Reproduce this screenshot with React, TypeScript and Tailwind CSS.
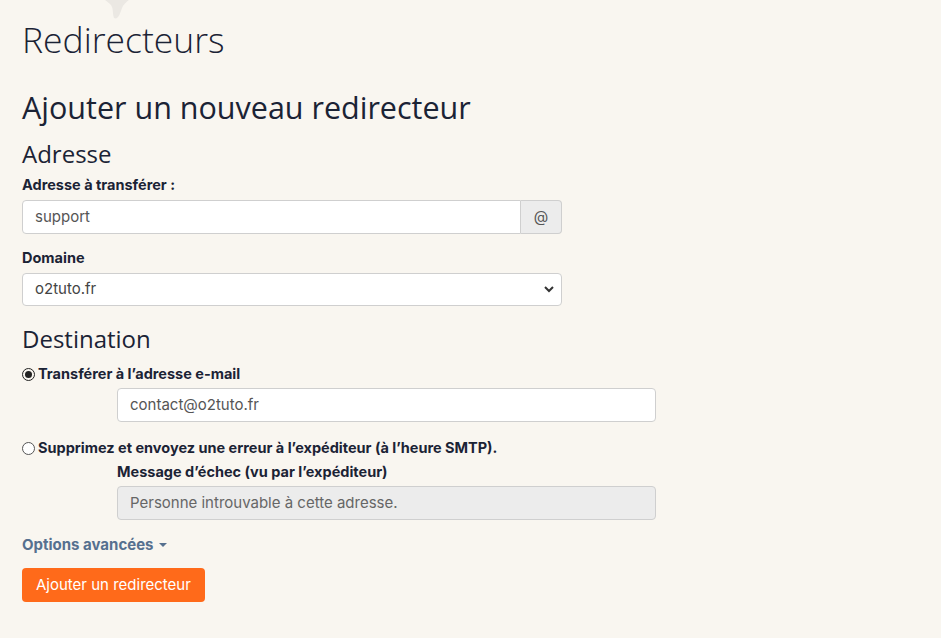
export default function App() {
  return (
    <main className="relative min-h-[638px] bg-[#f9f6f0] text-[#1b2335] font-['Inter','Liberation_Sans',sans-serif] overflow-hidden">
      <svg className="absolute left-[98px] top-[-14px]" width="40" height="36" viewBox="0 0 40 36">
        <path d="M4 6 C10 2 14 10 20 6 C26 2 30 8 36 6 C34 14 26 16 24 22 C22 28 20 34 16 32 C14 26 16 22 12 18 C8 14 2 12 4 6 Z" fill="#ebe8e3" />
      </svg>

      <div className="px-[22px] pt-[16px]">
        <h1 className="font-['Open_Sans',sans-serif] font-light text-[35.5px] leading-[46px] text-[#1b2335]">
          Redirecteurs
        </h1>

        <h2 className="mt-[27px] font-['Open_Sans',sans-serif] text-[30.5px] leading-[36px]">
          Ajouter un nouveau redirecteur
        </h2>

        <h3 className="mt-[14px] font-['Open_Sans',sans-serif] text-[24px] leading-[30px]">
          Adresse
        </h3>

        <label className="mt-[7px] block text-[14.5px] font-bold leading-[18px]">
          Adresse à transférer :
        </label>
        <div className="mt-[6px] flex w-[540px] h-[34px]">
          <input
            className="flex-1 min-w-0 bg-white border border-[#cfcfcf] rounded-l-[4px] px-[12px] text-[15px] text-[#555]"
            defaultValue="support"
          />
          <span className="w-[41px] flex items-center justify-center bg-[#ececec] border border-l-0 border-[#cfcfcf] rounded-r-[4px] text-[15px] text-[#555]">
            @
          </span>
        </div>

        <label className="mt-[15px] block text-[14.5px] font-bold leading-[18px]">Domaine</label>
        <div className="mt-[6px] relative w-[540px] h-[33px]">
          <select className="appearance-none w-full h-full bg-white border border-[#cfcfcf] rounded-[4px] px-[12px] text-[15px] text-[#444]">
            <option>o2tuto.fr</option>
          </select>
          <svg className="absolute right-[8px] top-[13px]" width="10" height="7" viewBox="0 0 10 7">
            <path d="M1 1 L5 5 L9 1" stroke="#333" strokeWidth="2" fill="none" />
          </svg>
        </div>

        <h3 className="mt-[18px] font-['Open_Sans',sans-serif] text-[24px] leading-[30px]">
          Destination
        </h3>

        <div className="mt-[11px] flex items-center gap-[3px]">
          <span className="w-[13px] h-[13px] rounded-full border border-[#222] flex items-center justify-center">
            <span className="w-[7px] h-[7px] rounded-full bg-[#222]" />
          </span>
          <span className="text-[14.5px] font-bold leading-[18px]">Transférer à l’adresse e-mail</span>
        </div>
        <div className="ml-[95px] mt-[5px] w-[539px] h-[34px] bg-white border border-[#cfcfcf] rounded-[4px] px-[12px] flex items-center text-[15px] text-[#555]">
          contact@o2tuto.fr
        </div>

        <div className="mt-[17px] flex items-center gap-[3px]">
          <span className="w-[13px] h-[13px] rounded-full border border-[#555] bg-white" />
          <span className="text-[14.5px] font-bold leading-[18px]">
            Supprimez et envoyez une erreur à l’expéditeur (à l’heure SMTP).
          </span>
        </div>
        <div className="ml-[95px]">
          <div className="mt-[6px] text-[14.5px] font-bold leading-[18px]">Message d’échec (vu par l’expéditeur)</div>
          <div className="mt-[5px] w-[539px] h-[34px] bg-[#ececec] border border-[#cfcfcf] rounded-[4px] px-[12px] flex items-center text-[15px] text-[#666]">
            Personne introuvable à cette adresse.
          </div>
        </div>

        <div className="mt-[16px] flex items-center gap-[5px] text-[15px] font-bold leading-[18px] text-[#56708f]">
          Options avancées
          <svg width="8" height="4" viewBox="0 0 8 4">
            <path d="M0 0 L8 0 L4 4 Z" fill="#56708f" />
          </svg>
        </div>

        <button className="mt-[14px] h-[34px] px-[14px] bg-[#ff6a1a] text-white rounded-[4px] text-[15px]">
          Ajouter un redirecteur
        </button>
      </div>
    </main>
  );
}
